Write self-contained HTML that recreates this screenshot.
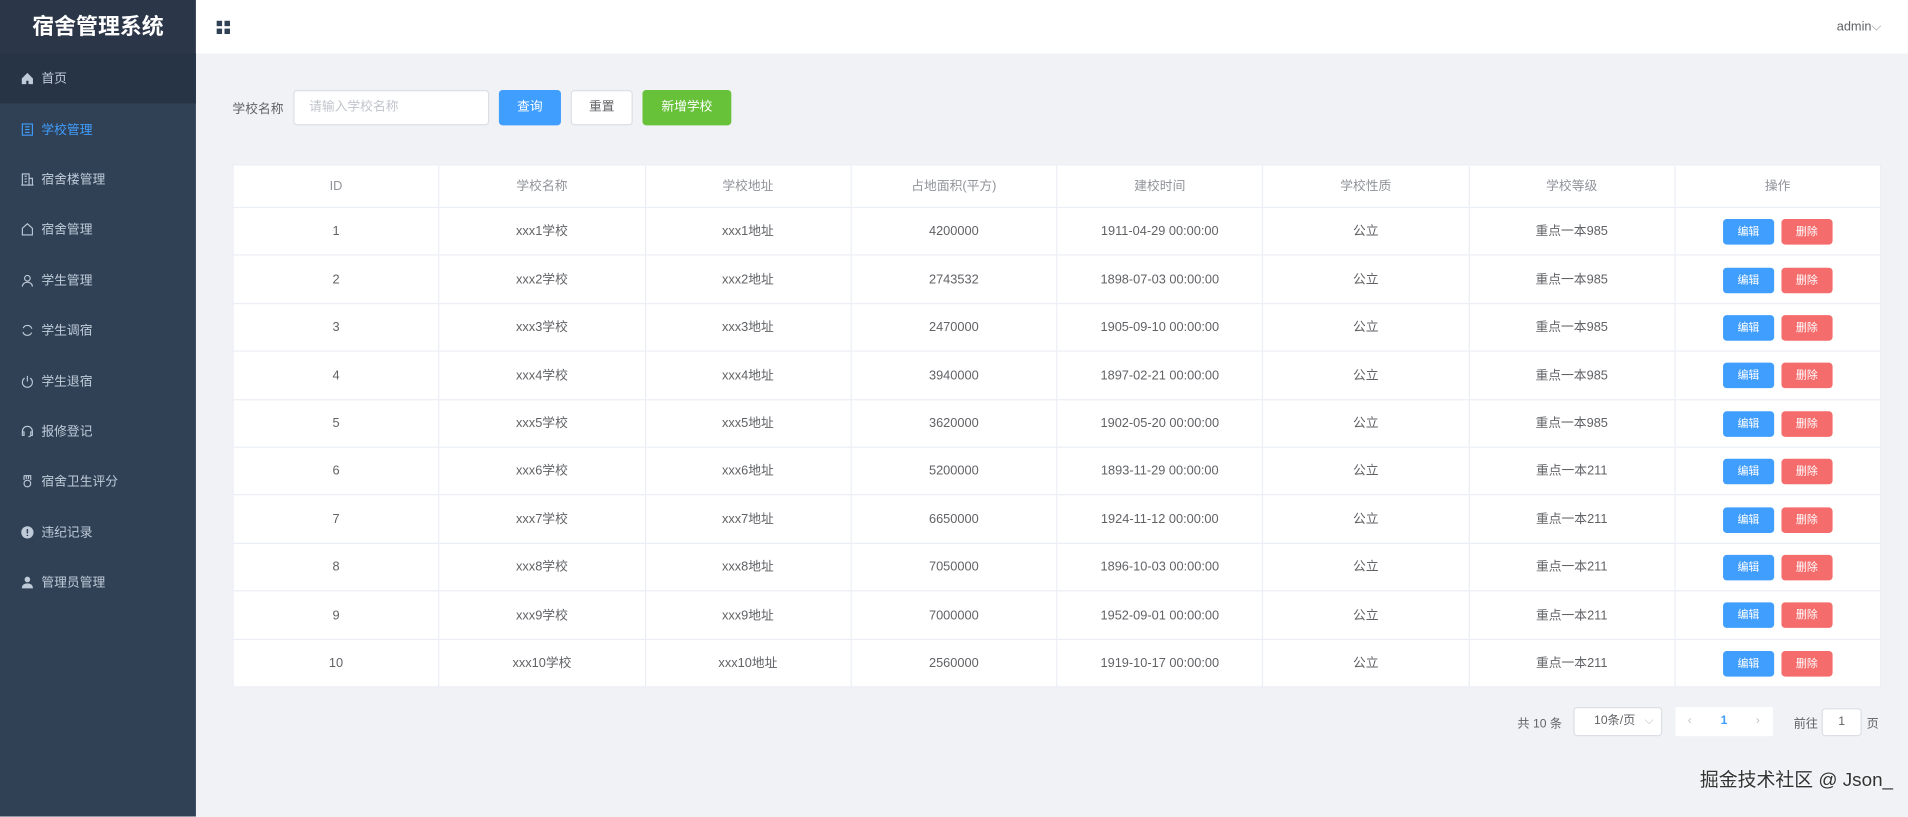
<!DOCTYPE html>
<html><head><meta charset="utf-8"><style>
*{box-sizing:border-box;margin:0;padding:0}
html,body{width:1908px;height:817px;overflow:hidden;background:#f0f2f5}
#w{width:1568px;height:671px;transform:scale(1.21684);transform-origin:0 0;position:relative;font-family:"Liberation Sans","Noto Sans CJK SC",sans-serif;font-size:10.5px;color:#606266;background:#f0f2f5}
.side{position:absolute;left:0;top:0;width:161px;height:671px;background:#304156}
.logo{height:44px;background:#2b3649;color:#fff;font-weight:bold;font-size:18px;text-align:center;line-height:44px}
.mi{height:41.4px;display:flex;align-items:center;padding-left:17px;color:#bfcbd9;font-size:10.5px}
.mi svg{width:11px;height:11px;margin-right:6px;flex:none}
.mi.home{background:#263445}
.mi.act{color:#409eff}
.head{position:absolute;left:161px;top:0;right:0;height:44px;background:#fff}
.btn{position:absolute;top:74px;height:29px;border-radius:3px;line-height:29px;text-align:center;font-size:10.5px}
table{position:absolute;left:191px;top:135px;width:1355px;border-collapse:collapse;background:#fff;table-layout:fixed}
td,th{border:1px solid #ebeef5;text-align:center;font-size:10.5px;line-height:1;padding-top:1px}
th{height:35px;color:#909399;font-weight:normal}
td{height:39.4px;color:#606266}
.b{display:inline-block;width:42px;height:21px;line-height:21px;border-radius:3px;color:#fff;font-size:9px;margin:0 3px;vertical-align:middle}
.pg{position:absolute;font-size:10px}
</style></head><body><div id="w">
<div class="side">
<div class="logo">宿舍管理系统</div>
<div class="mi home"><svg viewBox="0 0 12 12"><path d="M6 1L1 6v5h4V8h2v3h4V6z" fill="#bfcbd9"/></svg>首页</div>
<div class="mi act"><svg viewBox="0 0 12 12" fill="none" stroke="#409eff"><rect x="1.5" y="1" width="9" height="10"/><path d="M4 3.5h4M4 6h4M4 8.5h4"/></svg>学校管理</div>
<div class="mi"><svg viewBox="0 0 12 12" fill="none" stroke="#bfcbd9"><path d="M1.5 11V1h6v10M7.5 5h3v6M0.5 11h11M3.5 3h2M3.5 5.5h2M3.5 8h2"/></svg>宿舍楼管理</div>
<div class="mi"><svg viewBox="0 0 12 12" fill="none" stroke="#bfcbd9"><path d="M1.5 11V5L6 1l4.5 4v6z"/></svg>宿舍管理</div>
<div class="mi"><svg viewBox="0 0 12 12" fill="none" stroke="#bfcbd9"><circle cx="6" cy="4" r="2.5"/><path d="M1.5 11.5a4.5 4 0 0 1 9 0"/></svg>学生管理</div>
<div class="mi"><svg viewBox="0 0 12 12" fill="none" stroke="#bfcbd9"><path d="M10 4.5A4.2 4.2 0 0 0 2.2 4M2 7.5A4.2 4.2 0 0 0 9.8 8"/></svg>学生调宿</div>
<div class="mi"><svg viewBox="0 0 12 12" fill="none" stroke="#bfcbd9"><path d="M6 1v5M3.5 3A4.5 4.5 0 1 0 8.5 3"/></svg>学生退宿</div>
<div class="mi"><svg viewBox="0 0 12 12" fill="none" stroke="#bfcbd9"><path d="M1.5 8V6a4.5 4.5 0 0 1 9 0v2M1.5 6.5h1.5v3H1.5zM9 6.5h1.5v3H9zM10 9.5l-3 1.5"/></svg>报修登记</div>
<div class="mi"><svg viewBox="0 0 12 12" fill="none" stroke="#bfcbd9"><path d="M3 1h6v4M3 1v4M5 1v3M7 1v3"/><circle cx="6" cy="8" r="3"/></svg>宿舍卫生评分</div>
<div class="mi"><svg viewBox="0 0 12 12"><circle cx="6" cy="6" r="5.5" fill="#bfcbd9"/><path d="M6 3v4M6 8.3v1" stroke="#304156" stroke-width="1.3"/></svg>违纪记录</div>
<div class="mi"><svg viewBox="0 0 12 12" fill="#bfcbd9"><circle cx="6" cy="3.5" r="2.5"/><path d="M1 11.5c0-3 2-4.5 5-4.5s5 1.5 5 4.5z"/></svg>管理员管理</div>
</div>
<div class="head">
<svg style="position:absolute;left:17px;top:17px" width="11" height="11" viewBox="0 0 11 11" fill="#304156"><rect width="4.5" height="4.5"/><rect x="6.5" width="4.5" height="4.5"/><rect y="6.5" width="4.5" height="4.5"/><rect x="6.5" y="6.5" width="4.5" height="4.5"/></svg>
<div style="position:absolute;right:22px;top:16px;font-size:10.5px;color:#606266;white-space:nowrap">admin<span style="color:#909399">⌵</span></div>
</div>
<div style="position:absolute;left:191px;top:82px">学校名称</div>
<div class="btn" style="left:241px;width:161px;background:#fff;border:1px solid #dcdfe6;text-align:left;padding-left:12px;color:#c0c4cc;line-height:27px">请输入学校名称</div>
<div class="btn" style="left:410px;width:51px;background:#409eff;color:#fff">查询</div>
<div class="btn" style="left:469px;width:51px;background:#fff;border:1px solid #dcdfe6;line-height:27px">重置</div>
<div class="btn" style="left:528px;width:73px;background:#67c23a;color:#fff">新增学校</div>
<table>
<tr><th>ID</th><th>学校名称</th><th>学校地址</th><th>占地面积(平方)</th><th>建校时间</th><th>学校性质</th><th>学校等级</th><th>操作</th></tr>
<tr><td>1</td><td>xxx1学校</td><td>xxx1地址</td><td>4200000</td><td>1911-04-29 00:00:00</td><td>公立</td><td>重点一本985</td><td><span class="b" style="background:#409eff">编辑</span><span class="b" style="background:#f56c6c">删除</span></td></tr>
<tr><td>2</td><td>xxx2学校</td><td>xxx2地址</td><td>2743532</td><td>1898-07-03 00:00:00</td><td>公立</td><td>重点一本985</td><td><span class="b" style="background:#409eff">编辑</span><span class="b" style="background:#f56c6c">删除</span></td></tr>
<tr><td>3</td><td>xxx3学校</td><td>xxx3地址</td><td>2470000</td><td>1905-09-10 00:00:00</td><td>公立</td><td>重点一本985</td><td><span class="b" style="background:#409eff">编辑</span><span class="b" style="background:#f56c6c">删除</span></td></tr>
<tr><td>4</td><td>xxx4学校</td><td>xxx4地址</td><td>3940000</td><td>1897-02-21 00:00:00</td><td>公立</td><td>重点一本985</td><td><span class="b" style="background:#409eff">编辑</span><span class="b" style="background:#f56c6c">删除</span></td></tr>
<tr><td>5</td><td>xxx5学校</td><td>xxx5地址</td><td>3620000</td><td>1902-05-20 00:00:00</td><td>公立</td><td>重点一本985</td><td><span class="b" style="background:#409eff">编辑</span><span class="b" style="background:#f56c6c">删除</span></td></tr>
<tr><td>6</td><td>xxx6学校</td><td>xxx6地址</td><td>5200000</td><td>1893-11-29 00:00:00</td><td>公立</td><td>重点一本211</td><td><span class="b" style="background:#409eff">编辑</span><span class="b" style="background:#f56c6c">删除</span></td></tr>
<tr><td>7</td><td>xxx7学校</td><td>xxx7地址</td><td>6650000</td><td>1924-11-12 00:00:00</td><td>公立</td><td>重点一本211</td><td><span class="b" style="background:#409eff">编辑</span><span class="b" style="background:#f56c6c">删除</span></td></tr>
<tr><td>8</td><td>xxx8学校</td><td>xxx8地址</td><td>7050000</td><td>1896-10-03 00:00:00</td><td>公立</td><td>重点一本211</td><td><span class="b" style="background:#409eff">编辑</span><span class="b" style="background:#f56c6c">删除</span></td></tr>
<tr><td>9</td><td>xxx9学校</td><td>xxx9地址</td><td>7000000</td><td>1952-09-01 00:00:00</td><td>公立</td><td>重点一本211</td><td><span class="b" style="background:#409eff">编辑</span><span class="b" style="background:#f56c6c">删除</span></td></tr>
<tr><td>10</td><td>xxx10学校</td><td>xxx10地址</td><td>2560000</td><td>1919-10-17 00:00:00</td><td>公立</td><td>重点一本211</td><td><span class="b" style="background:#409eff">编辑</span><span class="b" style="background:#f56c6c">删除</span></td></tr>
</table>
<div class="pg" style="left:1247px;top:586px">共 10 条</div>
<div class="pg" style="left:1293px;top:581px;width:73px;height:24px;background:#fff;border:1px solid #dcdfe6;border-radius:3px;line-height:22px;padding-left:16px">10条/页<span style="position:absolute;right:6px;color:#c0c4cc">⌵</span></div>
<div class="pg" style="left:1377px;top:581px;width:80px;height:24px;background:#fff;line-height:24px">
<span style="position:absolute;left:10px;color:#c0c4cc">‹</span><span style="position:absolute;left:37px;color:#409eff;font-weight:bold">1</span><span style="position:absolute;left:66px;color:#c0c4cc">›</span></div>
<div class="pg" style="left:1474px;top:586px">前往</div>
<div class="pg" style="left:1497px;top:582px;width:33px;height:23px;background:#fff;border:1px solid #dcdfe6;border-radius:3px;text-align:center;line-height:21px">1</div>
<div class="pg" style="left:1534px;top:586px">页</div>
<div style="position:absolute;left:1397px;top:629px;font-size:15.5px;color:#333;white-space:nowrap;text-shadow:0 0 2px #fff">掘金技术社区 @ Json_</div>
</div></body></html>
